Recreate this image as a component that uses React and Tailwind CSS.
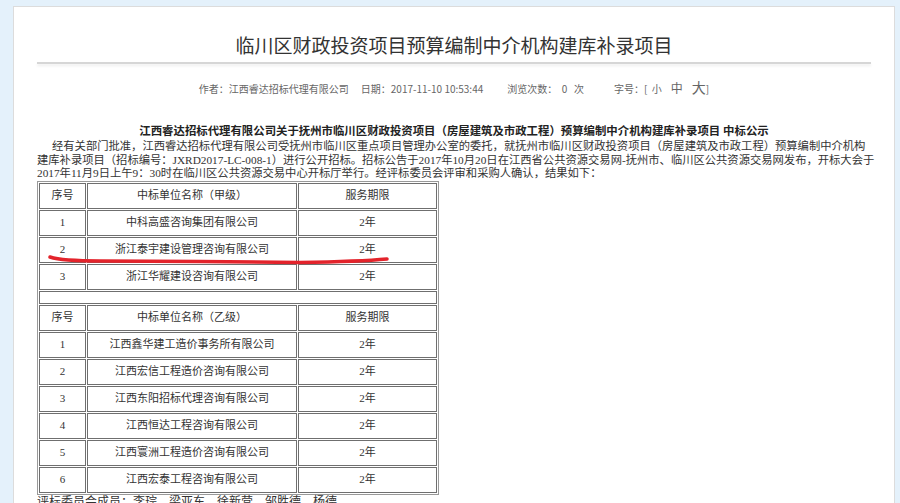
import React from 'react';

const groupA = [
  ['1', '中科高盛咨询集团有限公司'],
  ['2', '浙江泰宇建设管理咨询有限公司'],
  ['3', '浙江华耀建设咨询有限公司'],
];

const groupB = [
  ['1', '江西鑫华建工造价事务所有限公司'],
  ['2', '江西宏信工程造价咨询有限公司'],
  ['3', '江西东阳招标代理咨询有限公司'],
  ['4', '江西恒达工程咨询有限公司'],
  ['5', '江西寰洲工程造价咨询有限公司'],
  ['6', '江西宏泰工程咨询有限公司'],
];

const Cell = ({ children }) => (
  <td className="h-[26px] p-0 border border-[#6f6f6f] text-center align-middle">{children}</td>
);

const HeadRow = ({ grade }) => (
  <tr>
    <Cell>序号</Cell>
    <Cell>中标单位名称（{grade}）</Cell>
    <Cell>服务期限</Cell>
  </tr>
);

const Row = ({ no, name }) => (
  <tr>
    <Cell>{no}</Cell>
    <Cell>{name}</Cell>
    <Cell>2年</Cell>
  </tr>
);

export default function App() {
  return (
    <div className="relative w-[900px] h-[503px] overflow-hidden bg-[#e4f1fb] pt-[6px] font-['Noto_Sans_CJK_SC',sans-serif]">
      <div className="ml-[13px] w-[882px] min-h-[620px] bg-white border border-[#dcdcdc]">
        {/* title */}
        <div className="pt-[24px] text-center">
          <h1 className="text-[19px] leading-[28px] text-[#333]">临川区财政投资项目预算编制中介机构建库补录项目</h1>
        </div>
        <div className="mx-[23px] mt-[3px] h-[2px] bg-[#d6d6d6] shadow-[0_2px_3px_#ebebeb]" />

        {/* meta */}
        <div className="mt-[15px] flex justify-center items-baseline text-[10px] leading-[16px] text-[#666]">
          <span>作者：江西睿达招标代理有限公司</span>
          <span className="ml-[12px]">日期：2017-11-10 10:53:44</span>
          <span className="ml-[24px]">浏览次数：&nbsp; 0 &nbsp; 次</span>
          <span className="ml-[30px]">
            字号：[ &nbsp;小 &nbsp; &nbsp;<span className="text-[12px]">中</span> &nbsp; &nbsp;<span className="text-[14px]">大</span>]
          </span>
        </div>

        {/* article */}
        <div className="px-[23px] font-['Liberation_Serif','Noto_Sans_CJK_SC',serif] text-[#333]">
          <h2 className="mt-[27px] text-center text-[11.4px] leading-[14px] font-bold text-[#222] whitespace-nowrap">
            江西睿达招标代理有限公司关于抚州市临川区财政投资项目（房屋建筑及市政工程）预算编制中介机构建库补录项目 中标公示
          </h2>
          <p className="mt-[2px] text-[11.3px] leading-[13.5px] indent-[15px] whitespace-nowrap">
            经有关部门批准，江西睿达招标代理有限公司受抚州市临川区重点项目管理办公室的委托，就抚州市临川区财政投资项目（房屋建筑及市政工程）预算编制中介机构
            <br />
            建库补录项目（招标编号：JXRD2017-LC-008-1）进行公开招标。招标公告于2017年10月20日在江西省公共资源交易网-抚州市、临川区公共资源交易网发布，开标大会于
            <br />
            2017年11月9日上午9：30时在临川区公共资源交易中心开标厅举行。经评标委员会评审和采购人确认，结果如下：
          </p>

          <table className="table-fixed border-separate border-spacing-[1px] border border-[#999] w-[402px] text-[11px] text-[#333]">
            <colgroup>
              <col className="w-[47px]" />
              <col className="w-[210px]" />
              <col className="w-[139px]" />
            </colgroup>
            <tbody>
              <HeadRow grade="甲级" />
              {groupA.map(([no, name]) => (
                <Row key={'a' + no} no={no} name={name} />
              ))}
              <tr>
                <td colSpan={3} className="h-[13px] p-0 border border-[#6f6f6f]" />
              </tr>
              <HeadRow grade="乙级" />
              {groupB.map(([no, name]) => (
                <Row key={'b' + no} no={no} name={name} />
              ))}
            </tbody>
          </table>
          <p className="text-[12px] leading-[14px] whitespace-nowrap">评标委员会成员：李琮，梁亚东，徐新营，邹胜德，杨德。</p>
        </div>
      </div>

      {/* red marker stroke drawn over the table */}
      <svg className="absolute left-0 top-0 pointer-events-none" width="900" height="503">
        <path
          d="M50 257 Q 62 261 100 261 T 200 261.5 T 300 262.5 Q 360 261.5 387 259"
          fill="none"
          stroke="#e3232b"
          strokeWidth="3.5"
          strokeLinecap="round"
        />
      </svg>
    </div>
  );
}
